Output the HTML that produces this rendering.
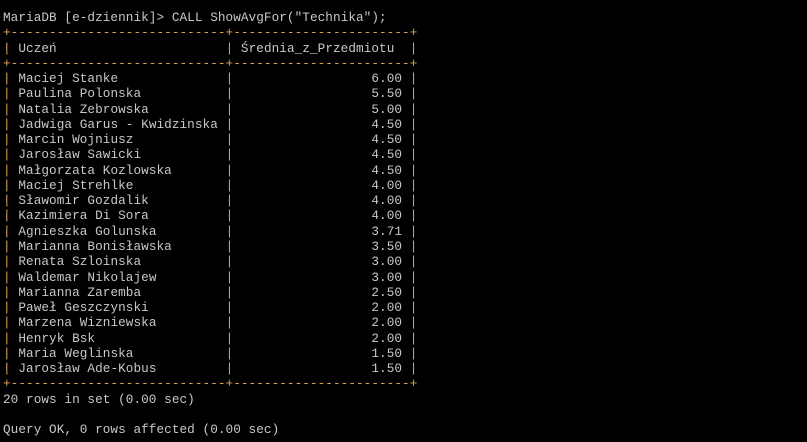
<!DOCTYPE html>
<html><head><meta charset="utf-8"><style>
html,body{margin:0;padding:0;background:#000;width:807px;height:442px;overflow:hidden}
pre{margin:0;padding:10px 0 0 3px;font-family:"Liberation Mono","Courier New",monospace;font-size:12.7px;letter-spacing:0.06px;line-height:15.27px;color:#c8c8c8;white-space:pre}
b{font-weight:normal;color:#e0a050}
</style></head><body><pre>MariaDB [e-dziennik]&gt; CALL ShowAvgFor("Technika");
<b>+----------------------------+-----------------------+</b>
<b>|</b> Uczeń                      <b>|</b> Średnia_z_Przedmiotu  <b>|</b>
<b>+----------------------------+-----------------------+</b>
<b>|</b> Maciej Stanke              <b>|</b>                  6.00 <b>|</b>
<b>|</b> Paulina Polonska           <b>|</b>                  5.50 <b>|</b>
<b>|</b> Natalia Zebrowska          <b>|</b>                  5.00 <b>|</b>
<b>|</b> Jadwiga Garus - Kwidzinska <b>|</b>                  4.50 <b>|</b>
<b>|</b> Marcin Wojniusz            <b>|</b>                  4.50 <b>|</b>
<b>|</b> Jarosław Sawicki           <b>|</b>                  4.50 <b>|</b>
<b>|</b> Małgorzata Kozlowska       <b>|</b>                  4.50 <b>|</b>
<b>|</b> Maciej Strehlke            <b>|</b>                  4.00 <b>|</b>
<b>|</b> Sławomir Gozdalik          <b>|</b>                  4.00 <b>|</b>
<b>|</b> Kazimiera Di Sora          <b>|</b>                  4.00 <b>|</b>
<b>|</b> Agnieszka Golunska         <b>|</b>                  3.71 <b>|</b>
<b>|</b> Marianna Bonisławska       <b>|</b>                  3.50 <b>|</b>
<b>|</b> Renata Szloinska           <b>|</b>                  3.00 <b>|</b>
<b>|</b> Waldemar Nikolajew         <b>|</b>                  3.00 <b>|</b>
<b>|</b> Marianna Zaremba           <b>|</b>                  2.50 <b>|</b>
<b>|</b> Paweł Geszczynski          <b>|</b>                  2.00 <b>|</b>
<b>|</b> Marzena Wizniewska         <b>|</b>                  2.00 <b>|</b>
<b>|</b> Henryk Bsk                 <b>|</b>                  2.00 <b>|</b>
<b>|</b> Maria Weglinska            <b>|</b>                  1.50 <b>|</b>
<b>|</b> Jarosław Ade-Kobus         <b>|</b>                  1.50 <b>|</b>
<b>+----------------------------+-----------------------+</b>
20 rows in set (0.00 sec)

Query OK, 0 rows affected (0.00 sec)
</pre></body></html>
